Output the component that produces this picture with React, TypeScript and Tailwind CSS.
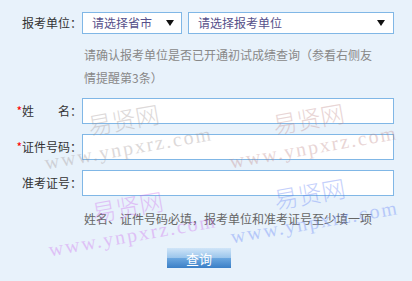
import type { ReactNode } from "react";

const cjk = "font-['Noto_Sans_CJK_SC','Noto_Sans',sans-serif]";

const Arrow = () => (
  <svg width="8" height="6" viewBox="0 0 8 6" className="shrink-0">
    <path d="M0 0h8L4 6z" fill="#111" />
  </svg>
);

const Row = ({ label, required, children }: { label: string; required?: boolean; children: ReactNode }) => (
  <div className="flex items-center">
    <div className="w-[82px] shrink-0 text-right text-[12px] leading-none text-[#333]">
      {required && <span className="text-[#ff0000]">*</span>}
      {label}
    </div>
    {children}
  </div>
);

const TextInput = () => (
  <input type="text" className="h-[26px] w-[312px] border border-[#80b7e6] bg-white outline-none" />
);

const Watermark = ({ className }: { className: string }) => (
  <div
    className={`pointer-events-none absolute flex w-[172px] -rotate-[10deg] flex-col items-center ${className}`}
  >
    <span className={`${cjk} text-[24px] font-light leading-[30px]`}>易贤网</span>
    <span className="font-['Liberation_Serif',serif] text-[20px] leading-[28px] tracking-[2px]">
      www.ynpxrz.com
    </span>
  </div>
);

export default function App() {
  return (
    <div className={`relative h-[281px] w-[412px] overflow-hidden bg-[#e8f2fb] pt-[12px] ${cjk}`}>
      <Row label="报考单位：">
        <div className="flex gap-[6px]">
          <div className="flex h-[22px] w-[100px] items-center justify-between border border-[#80b7e6] bg-white pl-[9px] pr-[7px] text-[12px] text-[#56508a]">
            请选择省市
            <Arrow />
          </div>
          <div className="flex h-[22px] w-[206px] items-center justify-between border border-[#80b7e6] bg-white pl-[9px] pr-[8px] text-[12px] text-[#56508a]">
            请选择报考单位
            <Arrow />
          </div>
        </div>
      </Row>

      <p className="ml-[84px] mt-[9px] w-[292px] text-[12px] leading-[23px] text-[#888]">
        请确认报考单位是否已开通初试成绩查询（参看右侧友情提醒第3条）
      </p>

      <div className="mt-[9px] flex flex-col gap-[10px]">
        <Row label="姓　　名：" required>
          <TextInput />
        </Row>
        <Row label="证件号码：" required>
          <TextInput />
        </Row>
        <Row label="准考证号：">
          <TextInput />
        </Row>
      </div>

      <p className="ml-[84px] mt-[11px] text-[12px] leading-[23px] text-[#666]">
        姓名、证件号码必填，报考单位和准考证号至少填一项
      </p>

      <button className="ml-[167px] mt-[18px] flex h-[20px] w-[64px] items-center justify-center bg-[linear-gradient(to_bottom,#d0e5f8_0%,#9cc6ec_48%,#6aa6df_52%,#3a7fc7_100%)] text-[13px] leading-none text-white">
        查询
      </button>

      <Watermark className="left-[40px] top-[104px] text-[#a09494] opacity-35" />
      <Watermark className="left-[225px] top-[103px] text-[#c08888] opacity-35" />
      <Watermark className="left-[44px] top-[191px] text-[#cc66ee] opacity-35" />
      <Watermark className="left-[226px] top-[178px] text-[#5a7cf6] opacity-35" />
    </div>
  );
}
